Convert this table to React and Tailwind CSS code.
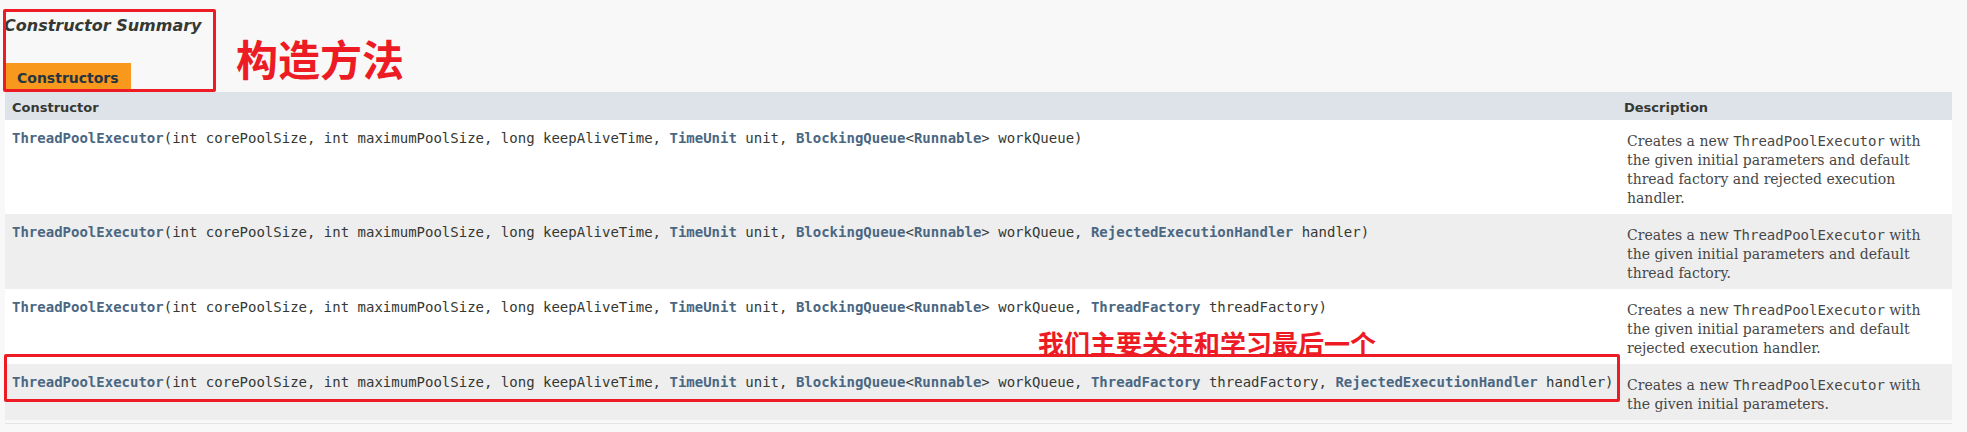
const rows = [
  {
    sig: [
      ["l", "ThreadPoolExecutor"],
      ["t", "(int corePoolSize, int maximumPoolSize, long keepAliveTime, "],
      ["l", "TimeUnit"],
      ["t", " unit, "],
      ["l", "BlockingQueue"],
      ["t", "<"],
      ["l", "Runnable"],
      ["t", "> workQueue)"],
    ],
    desc: "the given initial parameters and default thread factory and rejected execution handler.",
  },
  {
    sig: [
      ["l", "ThreadPoolExecutor"],
      ["t", "(int corePoolSize, int maximumPoolSize, long keepAliveTime, "],
      ["l", "TimeUnit"],
      ["t", " unit, "],
      ["l", "BlockingQueue"],
      ["t", "<"],
      ["l", "Runnable"],
      ["t", "> workQueue, "],
      ["l", "RejectedExecutionHandler"],
      ["t", " handler)"],
    ],
    desc: "the given initial parameters and default thread factory.",
  },
  {
    sig: [
      ["l", "ThreadPoolExecutor"],
      ["t", "(int corePoolSize, int maximumPoolSize, long keepAliveTime, "],
      ["l", "TimeUnit"],
      ["t", " unit, "],
      ["l", "BlockingQueue"],
      ["t", "<"],
      ["l", "Runnable"],
      ["t", "> workQueue, "],
      ["l", "ThreadFactory"],
      ["t", " threadFactory)"],
    ],
    desc: "the given initial parameters and default rejected execution handler.",
  },
  {
    sig: [
      ["l", "ThreadPoolExecutor"],
      ["t", "(int corePoolSize, int maximumPoolSize, long keepAliveTime, "],
      ["l", "TimeUnit"],
      ["t", " unit, "],
      ["l", "BlockingQueue"],
      ["t", "<"],
      ["l", "Runnable"],
      ["t", "> workQueue, "],
      ["l", "ThreadFactory"],
      ["t", " threadFactory, "],
      ["l", "RejectedExecutionHandler"],
      ["t", " handler)"],
    ],
    desc: "the given initial parameters.",
  },
];

function Signature({ parts }) {
  return (
    <code className="whitespace-pre font-['DejaVu_Sans_Mono',monospace] text-[14px] leading-[19px] text-[#353833]">
      {parts.map(([kind, text], i) =>
        kind === "l" ? (
          <span key={i} className="font-bold text-[#4a6782]">
            {text}
          </span>
        ) : (
          <span key={i}>{text}</span>
        )
      )}
    </code>
  );
}

export default function App() {
  return (
    <div className="relative h-[432px] w-full overflow-hidden bg-[#f8f8f8] font-['DejaVu_Sans',sans-serif]">
      {/* Summary block */}
      <div className="pl-[4px] pt-[16px]">
        <h3 className="text-[16px] leading-[20px] font-bold italic text-[#353833]">Constructor Summary</h3>
      </div>

      <div className="mt-[27px] pl-[5px] pr-[15px]">
        <div className="flex h-[29px] w-[126px] items-center bg-[#f8981d] pl-[12px] pt-px text-[14px] font-bold text-[#253441]">
          Constructors
        </div>

        {/* Table */}
        <div className="flex h-[28px] bg-[#dee3e9] pt-[4px] text-[13px] font-bold text-[#353833]">
          <div className="flex flex-1 items-center pl-[7px]">Constructor</div>
          <div className="flex w-[335px] items-center pl-[7px]">Description</div>
        </div>

        {rows.map((row, i) => (
          <div key={i} className={`flex ${i % 2 === 1 ? "bg-[#eeeeef]" : "bg-white"}`}>
            <div className="flex-1 pl-[7px] pt-[6px] pb-[12px]">
              <Signature parts={row.sig} />
            </div>
            <div className="w-[335px] pl-[10px] pr-[22px] pt-[12px] pb-[6px] font-['DejaVu_Serif',serif] text-[14px] leading-[19px] text-[#474747]">
              Creates a new{" "}
              <code className="font-['DejaVu_Sans_Mono',monospace] text-[14px]">ThreadPoolExecutor</code> with {row.desc}
            </div>
          </div>
        ))}
        <div className="mt-[3px] border-b border-[#e4e4e4]" />
      </div>

      {/* Annotations */}
      <div className="absolute left-[3px] top-[9px] h-[83px] w-[213px] rounded-[2px] border-[3px] border-[#ed1c24]" />
      <div className="absolute left-[236px] top-[33px] font-['Noto_Sans_CJK_SC',sans-serif] text-[42px] leading-[50px] font-bold text-[#ed1c24]">
        构造方法
      </div>
      <div className="absolute left-[4px] top-[354px] h-[48px] w-[1616px] rounded-[2px] border-[3px] border-[#ed1c24]" />
      <div className="absolute left-[1038px] top-[327px] font-['Noto_Sans_CJK_SC',sans-serif] text-[26px] leading-[32px] font-bold text-[#ed1c24]">
        我们主要关注和学习最后一个
      </div>
    </div>
  );
}
